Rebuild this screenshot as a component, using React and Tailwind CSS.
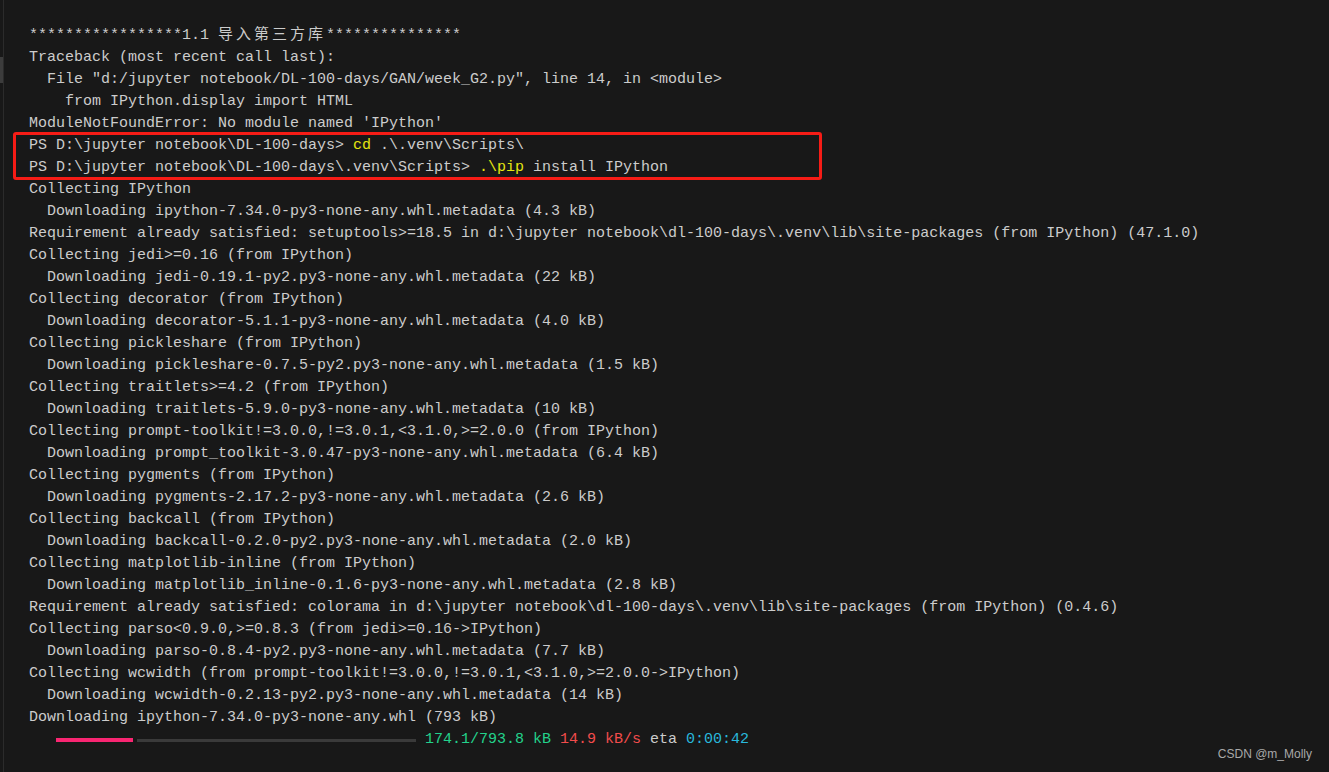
import React from 'react';

const lines1 = [
  'Traceback (most recent call last):',
  '  File "d:/jupyter notebook/DL-100-days/GAN/week_G2.py", line 14, in <module>',
  '    from IPython.display import HTML',
  "ModuleNotFoundError: No module named 'IPython'",
];

const lines2 = [
  'Collecting IPython',
  '  Downloading ipython-7.34.0-py3-none-any.whl.metadata (4.3 kB)',
  'Requirement already satisfied: setuptools>=18.5 in d:\\jupyter notebook\\dl-100-days\\.venv\\lib\\site-packages (from IPython) (47.1.0)',
  'Collecting jedi>=0.16 (from IPython)',
  '  Downloading jedi-0.19.1-py2.py3-none-any.whl.metadata (22 kB)',
  'Collecting decorator (from IPython)',
  '  Downloading decorator-5.1.1-py3-none-any.whl.metadata (4.0 kB)',
  'Collecting pickleshare (from IPython)',
  '  Downloading pickleshare-0.7.5-py2.py3-none-any.whl.metadata (1.5 kB)',
  'Collecting traitlets>=4.2 (from IPython)',
  '  Downloading traitlets-5.9.0-py3-none-any.whl.metadata (10 kB)',
  'Collecting prompt-toolkit!=3.0.0,!=3.0.1,<3.1.0,>=2.0.0 (from IPython)',
  '  Downloading prompt_toolkit-3.0.47-py3-none-any.whl.metadata (6.4 kB)',
  'Collecting pygments (from IPython)',
  '  Downloading pygments-2.17.2-py3-none-any.whl.metadata (2.6 kB)',
  'Collecting backcall (from IPython)',
  '  Downloading backcall-0.2.0-py2.py3-none-any.whl.metadata (2.0 kB)',
  'Collecting matplotlib-inline (from IPython)',
  '  Downloading matplotlib_inline-0.1.6-py3-none-any.whl.metadata (2.8 kB)',
  'Requirement already satisfied: colorama in d:\\jupyter notebook\\dl-100-days\\.venv\\lib\\site-packages (from IPython) (0.4.6)',
  'Collecting parso<0.9.0,>=0.8.3 (from jedi>=0.16->IPython)',
  '  Downloading parso-0.8.4-py2.py3-none-any.whl.metadata (7.7 kB)',
  'Collecting wcwidth (from prompt-toolkit!=3.0.0,!=3.0.1,<3.1.0,>=2.0.0->IPython)',
  '  Downloading wcwidth-0.2.13-py2.py3-none-any.whl.metadata (14 kB)',
  'Downloading ipython-7.34.0-py3-none-any.whl (793 kB)',
];

function Line({ children }) {
  return <div className="h-[22px] whitespace-pre">{children}</div>;
}

export default function App() {
  return (
    <div className="relative w-[1329px] h-[772px] overflow-hidden bg-[#181818] text-[#cccccc] font-['Liberation_Mono',monospace] text-[15px] leading-[22px]">
      {/* left gutter */}
      <div className="absolute left-[3px] top-0 h-full w-px bg-[#2b2b2b]" />
      <div className="absolute left-0 top-[57px] h-[26px] w-[3px] bg-[#3c3c3c]" />

      <div className="pt-[25px] pl-[29px]">
        <Line>
          *****************1.1{' '}
          <span className="font-['Noto_Sans_CJK_SC',sans-serif] tracking-[3px] leading-[12px]">导入第三方库</span>
          ***************
        </Line>
        {lines1.map((l, i) => <Line key={i}>{l}</Line>)}

        <div className="relative">
          <span className="absolute left-[-16px] top-[-3px] w-[809px] h-[48px] border-[3px] border-[#f61c16] rounded-[3px]" />
          <Line>PS D:\jupyter notebook\DL-100-days&gt; <span className="text-[#e5e510]">cd</span> .\.venv\Scripts\</Line>
          <Line>PS D:\jupyter notebook\DL-100-days\.venv\Scripts&gt; <span className="text-[#e5e510]">.\pip</span> install IPython</Line>
        </div>

        {lines2.map((l, i) => <Line key={i}>{l}</Line>)}

        <div className="h-[22px] flex items-center whitespace-pre">
          <div className="ml-[27px] w-[77px] h-[4px] bg-[#f92672]" />
          <div className="ml-[4px] w-[279px] h-[3px] bg-[#3a3a3a]" />
          <span className="ml-[9px] text-[#23d18b]">174.1/793.8 kB</span>
          <span className="ml-[9px] text-[#f14c4c]">14.9 kB/s</span>
          <span className="ml-[9px]">eta</span>
          <span className="ml-[9px] text-[#29b8db]">0:00:42</span>
        </div>
      </div>

      <div className="absolute right-[17px] bottom-[7px] font-['Liberation_Sans',sans-serif] text-[12px] text-[#a8a8a8]">
        CSDN @m_Molly
      </div>
    </div>
  );
}
